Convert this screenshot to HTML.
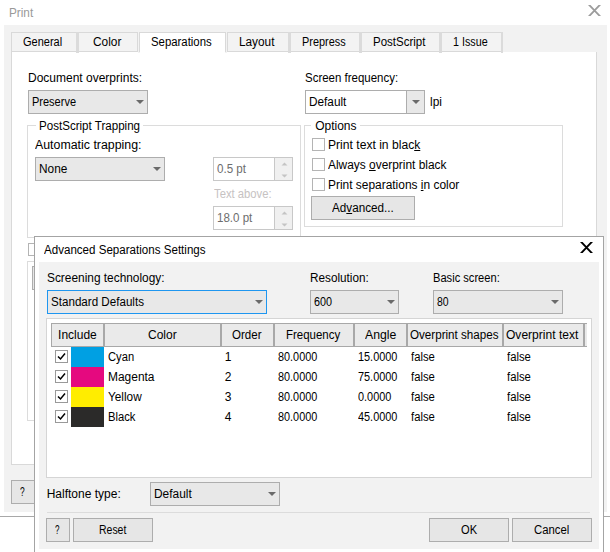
<!DOCTYPE html>
<html><head><meta charset="utf-8"><title>Print</title><style>
html,body{margin:0;padding:0;background:#fff;overflow:hidden;}
body{width:610px;height:552px;overflow:hidden;position:relative;font-family:"Liberation Sans",sans-serif;}
.a{position:absolute;box-sizing:content-box;}
.t{position:absolute;white-space:nowrap;line-height:14px;height:14px;transform-origin:0 50%;}
u{text-decoration:underline;}
</style></head><body>
<div class="a" style="left:4px;top:25px;width:603px;height:487px;background:#f2f2f2;"></div>
<div class="a" style="left:0px;top:516px;width:610px;height:1px;background:#a8a8a8;"></div>
<div class="t" style="left:9.2px;top:6.0px;color:#999;font-size:12px;transform:scaleX(0.9798);">Print</div>
<svg class="a" style="left:588px;top:5px" width="13" height="11" viewBox="0 0 13 11"><path d="M0 0H2.5L13 11H10.5ZM10.5 0H13L2.5 11H0Z" fill="#9c9c9c"/></svg>
<div class="a" style="left:11px;top:52px;width:584px;height:412px;background:#fff;border:1px solid #d9d9d9;border-top:none;"></div>
<div class="a" style="left:11px;top:32px;width:490px;height:18px;background:#f3f3f3;border:1px solid #d9d9d9;"></div>
<div class="a" style="left:76.2px;top:32px;width:2.6px;height:20.7px;background:#dbdbdb;"></div>
<div class="a" style="left:288.2px;top:32px;width:2.4px;height:20.7px;background:#dbdbdb;"></div>
<div class="a" style="left:359.3px;top:32px;width:2.4px;height:20.7px;background:#dbdbdb;"></div>
<div class="a" style="left:439.2px;top:32px;width:2.4px;height:20.7px;background:#dbdbdb;"></div>
<div class="a" style="left:501.1px;top:32px;width:1.7px;height:20.7px;background:#dbdbdb;"></div>
<div class="a" style="left:138px;top:32px;width:89px;height:21px;background:#f2f2f2;"></div>
<div class="a" style="left:137px;top:32px;width:1px;height:20px;background:#d9d9d9;"></div>
<div class="a" style="left:227px;top:32px;width:1px;height:20px;background:#d9d9d9;"></div>
<div class="a" style="left:139px;top:32px;width:85px;height:19px;background:#fff;border:1px solid #d9d9d9;border-bottom:none;"></div>
<div class="a" style="left:140px;top:52px;width:85px;height:1px;background:#fff;"></div>
<div class="t" style="left:23.3px;top:35.0px;color:#000;font-size:12px;transform:scaleX(0.9157);">General</div>
<div class="t" style="left:93.3px;top:35.0px;color:#000;font-size:12px;transform:scaleX(0.9895);">Color</div>
<div class="t" style="left:150.7px;top:35.0px;color:#000;font-size:12px;transform:scaleX(0.9469);">Separations</div>
<div class="t" style="left:239.1px;top:35.0px;color:#000;font-size:12px;transform:scaleX(0.9833);">Layout</div>
<div class="t" style="left:302.1px;top:35.0px;color:#000;font-size:12px;transform:scaleX(0.9083);">Prepress</div>
<div class="t" style="left:373.3px;top:35.0px;color:#000;font-size:12px;transform:scaleX(0.9580);">PostScript</div>
<div class="t" style="left:453.3px;top:35.0px;color:#000;font-size:12px;transform:scaleX(0.8966);">1 Issue</div>
<div class="t" style="left:28.0px;top:71.0px;color:#000;font-size:12px;">Document overprints:</div>
<div class="a" style="left:28px;top:90px;width:118px;height:22px;background:#e8e8e8;border:1px solid #adadad;"></div>
<div class="t" style="left:31.7px;top:95.0px;color:#000;font-size:12px;transform:scaleX(0.9167);">Preserve</div>
<svg class="a" style="left:136.0px;top:100px" width="8" height="4" viewBox="0 0 8 4"><path d="M0 0H8L4.0 4Z" fill="#6a6a6a"/></svg>
<div class="t" style="left:305.2px;top:71.0px;color:#000;font-size:12px;transform:scaleX(0.9559);">Screen frequency:</div>
<div class="a" style="left:305px;top:90px;width:118px;height:22px;background:#fff;border:1px solid #adadad;"></div>
<div class="a" style="left:406px;top:90px;width:17px;height:22px;background:#e8e8e8;border:1px solid #adadad;"></div>
<svg class="a" style="left:412.0px;top:100px" width="8" height="4" viewBox="0 0 8 4"><path d="M0 0H8L4.0 4Z" fill="#6a6a6a"/></svg>
<div class="t" style="left:309.1px;top:95.0px;color:#000;font-size:12px;transform:scaleX(0.9816);">Default</div>
<div class="t" style="left:430.3px;top:95.0px;color:#000;font-size:12px;transform:scaleX(0.9917);">lpi</div>
<div class="a" style="left:27px;top:125px;width:272px;height:111px;border:1px solid #dcdcdc;"></div>
<div class="a" style="left:36px;top:120px;width:107px;height:12px;background:#fff;"></div>
<div class="t" style="left:38.7px;top:119.0px;color:#000;font-size:12px;transform:scaleX(0.9647);">PostScript Trapping</div>
<div class="t" style="left:35.2px;top:138.0px;color:#000;font-size:12px;transform:scaleX(1.0300);">Automatic trapping:</div>
<div class="a" style="left:35px;top:157px;width:128px;height:22px;background:#e8e8e8;border:1px solid #adadad;"></div>
<div class="t" style="left:39.4px;top:162.0px;color:#000;font-size:12px;transform:scaleX(0.9861);">None</div>
<svg class="a" style="left:153.0px;top:167px" width="8" height="4" viewBox="0 0 8 4"><path d="M0 0H8L4.0 4Z" fill="#6a6a6a"/></svg>
<div class="a" style="left:213px;top:157px;width:78px;height:22px;background:#fff;border:1px solid #c8c8c8;"></div>
<div class="a" style="left:274px;top:157px;width:17px;height:22px;background:#f0f0f0;border:1px solid #c8c8c8;"></div>
<div class="t" style="left:216.7px;top:162.0px;color:#6d6d6d;font-size:12px;transform:scaleX(0.9667);">0.5 pt</div>
<svg class="a" style="left:280.5px;top:162px" width="7" height="17" viewBox="0 0 7 17"><path d="M0.5 3.5H6.5L3.5 0.5ZM0.5 12.5H6.5L3.5 15.5Z" fill="#c4c4c4"/></svg>
<div class="a" style="left:213px;top:206px;width:78px;height:22px;background:#fff;border:1px solid #c8c8c8;"></div>
<div class="a" style="left:274px;top:206px;width:17px;height:22px;background:#f0f0f0;border:1px solid #c8c8c8;"></div>
<div class="t" style="left:216.7px;top:211.0px;color:#6d6d6d;font-size:12px;transform:scaleX(0.9619);">18.0 pt</div>
<svg class="a" style="left:280.5px;top:211px" width="7" height="17" viewBox="0 0 7 17"><path d="M0.5 3.5H6.5L3.5 0.5ZM0.5 12.5H6.5L3.5 15.5Z" fill="#c4c4c4"/></svg>
<div class="t" style="left:213.7px;top:187.0px;color:#c6c2c2;font-size:12px;transform:scaleX(0.9381);">Text above:</div>
<div class="a" style="left:304px;top:125px;width:257px;height:100px;border:1px solid #dcdcdc;"></div>
<div class="a" style="left:311px;top:120px;width:49px;height:12px;background:#fff;"></div>
<div class="t" style="left:315.2px;top:119.0px;color:#000;font-size:12px;">Options</div>
<div class="a" style="left:312px;top:138px;width:11px;height:11px;background:#fff;border:1px solid #b4b4b4;"></div>
<div class="t" style="left:327.7px;top:138.0px;color:#000;font-size:12px;transform:scaleX(1.0098);">Print text in blac<u>k</u></div>
<div class="a" style="left:312px;top:158px;width:11px;height:11px;background:#fff;border:1px solid #b4b4b4;"></div>
<div class="t" style="left:327.7px;top:158.0px;color:#000;font-size:12px;transform:scaleX(0.9925);">Always <u>o</u>verprint black</div>
<div class="a" style="left:312px;top:178px;width:11px;height:11px;background:#fff;border:1px solid #b4b4b4;"></div>
<div class="t" style="left:327.7px;top:178.0px;color:#000;font-size:12px;transform:scaleX(0.9939);">Print separations <u>i</u>n color</div>
<div class="a" style="left:311px;top:196px;width:102px;height:22px;background:#e6e6e6;border:1px solid #adadad;"></div>
<div class="t" style="left:331.5px;top:201.0px;color:#000;font-size:12px;transform:scaleX(0.9748);">Ad<u>v</u>anced...</div>
<div class="a" style="left:28px;top:243px;width:11px;height:11px;background:#fff;border:1px solid #b4b4b4;"></div>
<div class="a" style="left:27px;top:261px;width:272px;height:158px;border:1px solid #dcdcdc;"></div>
<div class="a" style="left:32px;top:266px;width:100px;height:22px;background:#e6e6e6;border:1px solid #adadad;"></div>
<div class="a" style="left:11px;top:480px;width:24px;height:22px;background:#e6e6e6;border:1px solid #adadad;"></div>
<div class="t" style="left:20.0px;top:485.0px;color:#000;font-size:12px;transform:scaleX(0.7015);">?</div>
<div class="a" style="left:34px;top:236px;width:568px;height:315px;background:#fff;border:1px solid #a4a4a4;border-bottom:none;"></div>
<div class="a" style="left:39px;top:262px;width:560px;height:287px;background:#f2f2f2;"></div>
<div class="t" style="left:43.7px;top:242.5px;color:#000;font-size:12px;transform:scaleX(0.9648);">Advanced Separations Settings</div>
<svg class="a" style="left:580px;top:242px" width="13" height="11" viewBox="0 0 13 11"><path d="M0 0H2.6L13 11H10.4ZM10.4 0H13L2.6 11H0Z" fill="#000"/></svg>
<div class="t" style="left:46.7px;top:270.5px;color:#000;font-size:12px;transform:scaleX(0.9899);">Screening technology:</div>
<div class="a" style="left:47px;top:290px;width:218px;height:22px;background:#e8e8e8;border:1px solid #1e96f0;"></div>
<div class="t" style="left:50.7px;top:294.6px;color:#000;font-size:12px;transform:scaleX(0.9677);">Standard Defaults</div>
<svg class="a" style="left:255.0px;top:300px" width="8" height="4" viewBox="0 0 8 4"><path d="M0 0H8L4.0 4Z" fill="#6a6a6a"/></svg>
<div class="t" style="left:309.7px;top:270.5px;color:#000;font-size:12px;transform:scaleX(0.9783);">Resolution:</div>
<div class="a" style="left:310px;top:290px;width:87px;height:22px;background:#e8e8e8;border:1px solid #adadad;"></div>
<div class="t" style="left:313.7px;top:294.6px;color:#000;font-size:12px;transform:scaleX(0.9000);">600</div>
<svg class="a" style="left:387.0px;top:300px" width="8" height="4" viewBox="0 0 8 4"><path d="M0 0H8L4.0 4Z" fill="#6a6a6a"/></svg>
<div class="t" style="left:432.9px;top:270.5px;color:#000;font-size:12px;transform:scaleX(0.9264);">Basic screen:</div>
<div class="a" style="left:433px;top:290px;width:128px;height:22px;background:#e8e8e8;border:1px solid #adadad;"></div>
<div class="t" style="left:437.1px;top:294.6px;color:#000;font-size:12px;transform:scaleX(0.8722);">80</div>
<svg class="a" style="left:551.0px;top:300px" width="8" height="4" viewBox="0 0 8 4"><path d="M0 0H8L4.0 4Z" fill="#6a6a6a"/></svg>
<div class="a" style="left:46px;top:318px;width:544px;height:158px;background:#fff;border:1px solid #d5d5d5;"></div>
<div class="a" style="left:51px;top:323px;width:51px;height:22px;background:#eaeaea;border:1px solid #a8a8a8;"></div>
<div class="t" style="left:58.1px;top:327.5px;color:#000;font-size:12px;">Include</div>
<div class="a" style="left:104px;top:323px;width:115px;height:22px;background:#eaeaea;border:1px solid #a8a8a8;"></div>
<div class="t" style="left:148.0px;top:327.5px;color:#000;font-size:12px;">Color</div>
<div class="a" style="left:221px;top:323px;width:51px;height:22px;background:#eaeaea;border:1px solid #a8a8a8;"></div>
<div class="t" style="left:232.2px;top:327.5px;color:#000;font-size:12px;transform:scaleX(0.9609);">Order</div>
<div class="a" style="left:274px;top:323px;width:78px;height:22px;background:#eaeaea;border:1px solid #a8a8a8;"></div>
<div class="t" style="left:286.3px;top:327.5px;color:#000;font-size:12px;transform:scaleX(0.9559);">Frequency</div>
<div class="a" style="left:354px;top:323px;width:51px;height:22px;background:#eaeaea;border:1px solid #a8a8a8;"></div>
<div class="t" style="left:365.0px;top:327.5px;color:#000;font-size:12px;transform:scaleX(1.0228);">Angle</div>
<div class="a" style="left:407px;top:323px;width:94px;height:22px;background:#eaeaea;border:1px solid #a8a8a8;"></div>
<div class="t" style="left:410.0px;top:327.5px;color:#000;font-size:12px;transform:scaleX(0.9683);">Overprint shapes</div>
<div class="a" style="left:503px;top:323px;width:79px;height:22px;background:#eaeaea;border:1px solid #a8a8a8;"></div>
<div class="t" style="left:506.4px;top:327.5px;color:#000;font-size:12px;transform:scaleX(1.0042);">Overprint text</div>
<div class="a" style="left:584px;top:323px;width:2px;height:22px;background:#eaeaea;border:1px solid #a8a8a8;border-right:none;"></div>
<div class="a" style="left:55px;top:350px;width:11px;height:11px;background:#fff;border:1px solid #999;"></div>
<svg class="a" style="left:55px;top:350px" width="13" height="13" viewBox="0 0 13 13"><path d="M3 6.5L5.5 9L10 3.5" stroke="#000" stroke-width="1.5" fill="none"/></svg>
<div class="a" style="left:71px;top:347px;width:33px;height:20px;background:#00a0e3;"></div>
<div class="t" style="left:108.2px;top:350.0px;color:#000;font-size:12px;transform:scaleX(0.9321);">Cyan</div>
<div class="t" style="left:224.7px;top:350.0px;color:#000;font-size:12px;">1</div>
<div class="t" style="left:277.7px;top:350.0px;color:#000;font-size:12px;transform:scaleX(0.9055);">80.0000</div>
<div class="t" style="left:357.7px;top:350.0px;color:#000;font-size:12px;transform:scaleX(0.9078);">15.0000</div>
<div class="t" style="left:410.7px;top:350.0px;color:#000;font-size:12px;transform:scaleX(0.9407);">false</div>
<div class="t" style="left:506.7px;top:350.0px;color:#000;font-size:12px;transform:scaleX(0.9407);">false</div>
<div class="a" style="left:55px;top:370px;width:11px;height:11px;background:#fff;border:1px solid #999;"></div>
<svg class="a" style="left:55px;top:370px" width="13" height="13" viewBox="0 0 13 13"><path d="M3 6.5L5.5 9L10 3.5" stroke="#000" stroke-width="1.5" fill="none"/></svg>
<div class="a" style="left:71px;top:367px;width:33px;height:20px;background:#e5097f;"></div>
<div class="t" style="left:108.2px;top:370.0px;color:#000;font-size:12px;transform:scaleX(0.9957);">Magenta</div>
<div class="t" style="left:224.7px;top:370.0px;color:#000;font-size:12px;">2</div>
<div class="t" style="left:277.7px;top:370.0px;color:#000;font-size:12px;transform:scaleX(0.9055);">80.0000</div>
<div class="t" style="left:357.7px;top:370.0px;color:#000;font-size:12px;transform:scaleX(0.9078);">75.0000</div>
<div class="t" style="left:410.7px;top:370.0px;color:#000;font-size:12px;transform:scaleX(0.9407);">false</div>
<div class="t" style="left:506.7px;top:370.0px;color:#000;font-size:12px;transform:scaleX(0.9407);">false</div>
<div class="a" style="left:55px;top:390px;width:11px;height:11px;background:#fff;border:1px solid #999;"></div>
<svg class="a" style="left:55px;top:390px" width="13" height="13" viewBox="0 0 13 13"><path d="M3 6.5L5.5 9L10 3.5" stroke="#000" stroke-width="1.5" fill="none"/></svg>
<div class="a" style="left:71px;top:387px;width:33px;height:20px;background:#ffed00;"></div>
<div class="t" style="left:108.2px;top:390.0px;color:#000;font-size:12px;transform:scaleX(0.9825);">Yellow</div>
<div class="t" style="left:224.7px;top:390.0px;color:#000;font-size:12px;">3</div>
<div class="t" style="left:277.7px;top:390.0px;color:#000;font-size:12px;transform:scaleX(0.9055);">80.0000</div>
<div class="t" style="left:357.7px;top:390.0px;color:#000;font-size:12px;transform:scaleX(0.9084);">0.0000</div>
<div class="t" style="left:410.7px;top:390.0px;color:#000;font-size:12px;transform:scaleX(0.9407);">false</div>
<div class="t" style="left:506.7px;top:390.0px;color:#000;font-size:12px;transform:scaleX(0.9407);">false</div>
<div class="a" style="left:55px;top:410px;width:11px;height:11px;background:#fff;border:1px solid #999;"></div>
<svg class="a" style="left:55px;top:410px" width="13" height="13" viewBox="0 0 13 13"><path d="M3 6.5L5.5 9L10 3.5" stroke="#000" stroke-width="1.5" fill="none"/></svg>
<div class="a" style="left:71px;top:407px;width:33px;height:20px;background:#2b2a29;"></div>
<div class="t" style="left:108.2px;top:410.0px;color:#000;font-size:12px;transform:scaleX(0.9354);">Black</div>
<div class="t" style="left:224.7px;top:410.0px;color:#000;font-size:12px;">4</div>
<div class="t" style="left:277.7px;top:410.0px;color:#000;font-size:12px;transform:scaleX(0.9055);">80.0000</div>
<div class="t" style="left:357.7px;top:410.0px;color:#000;font-size:12px;transform:scaleX(0.9078);">45.0000</div>
<div class="t" style="left:410.7px;top:410.0px;color:#000;font-size:12px;transform:scaleX(0.9407);">false</div>
<div class="t" style="left:506.7px;top:410.0px;color:#000;font-size:12px;transform:scaleX(0.9407);">false</div>
<div class="t" style="left:46.7px;top:486.7px;color:#000;font-size:12px;">Halftone type:</div>
<div class="a" style="left:150px;top:482px;width:128px;height:22px;background:#e8e8e8;border:1px solid #adadad;"></div>
<div class="t" style="left:153.7px;top:486.7px;color:#000;font-size:12px;transform:scaleX(0.9921);">Default</div>
<svg class="a" style="left:268.0px;top:492px" width="8" height="4" viewBox="0 0 8 4"><path d="M0 0H8L4.0 4Z" fill="#6a6a6a"/></svg>
<div class="a" style="left:47px;top:512px;width:543px;height:1px;background:#dcdcdc;"></div>
<div class="a" style="left:46px;top:518px;width:22px;height:22px;background:#e6e6e6;border:1px solid #adadad;"></div>
<div class="t" style="left:55.2px;top:523.0px;color:#000;font-size:12px;transform:scaleX(0.6716);">?</div>
<div class="a" style="left:73px;top:518px;width:78px;height:22px;background:#e6e6e6;border:1px solid #adadad;"></div>
<div class="t" style="left:99.4px;top:523.0px;color:#000;font-size:12px;transform:scaleX(0.8722);">Reset</div>
<div class="a" style="left:429px;top:518px;width:78px;height:22px;background:#e6e6e6;border:1px solid #adadad;"></div>
<div class="t" style="left:461.2px;top:523.0px;color:#000;font-size:12px;transform:scaleX(0.9249);">OK</div>
<div class="a" style="left:512px;top:518px;width:78px;height:22px;background:#e6e6e6;border:1px solid #adadad;"></div>
<div class="t" style="left:533.9px;top:523.0px;color:#000;font-size:12px;transform:scaleX(0.9439);">Cancel</div>
</body></html>
